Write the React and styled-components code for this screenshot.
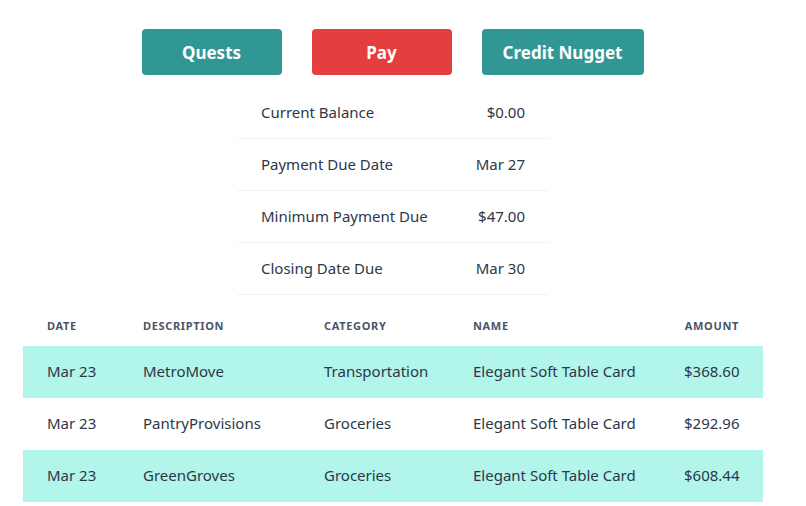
import React from "react";
import styled, { createGlobalStyle } from "styled-components";

const GlobalStyle = createGlobalStyle`
  body {
    margin: 0;
    background: #ffffff;
    font-family: "Noto Sans", "Open Sans", sans-serif;
    color: #2d3748;
  }
`;

const summary = [
  { label: "Current Balance", value: "$0.00" },
  { label: "Payment Due Date", value: "Mar 27" },
  { label: "Minimum Payment Due", value: "$47.00" },
  { label: "Closing Date Due", value: "Mar 30" },
];

const transactions = [
  { date: "Mar 23", desc: "MetroMove", cat: "Transportation", name: "Elegant Soft Table Card", amount: "$368.60" },
  { date: "Mar 23", desc: "PantryProvisions", cat: "Groceries", name: "Elegant Soft Table Card", amount: "$292.96" },
  { date: "Mar 23", desc: "GreenGroves", cat: "Groceries", name: "Elegant Soft Table Card", amount: "$608.44" },
];

const App = () => {
  return (
    <>
      <GlobalStyle />
      <Page>
        <Actions>
          <ActionButton $tone="teal" $width={140}>Quests</ActionButton>
          <ActionButton $tone="red" $width={140}>Pay</ActionButton>
          <ActionButton $tone="teal" $width={162}>Credit Nugget</ActionButton>
        </Actions>

        <Summary>
          <tbody>
            {summary.map((row) => (
              <SummaryRow key={row.label}>
                <SummaryCell>{row.label}</SummaryCell>
                <SummaryCell $right>{row.value}</SummaryCell>
              </SummaryRow>
            ))}
          </tbody>
        </Summary>

        <Transactions>
          <colgroup>
            <col style={{ width: 96 }} />
            <col style={{ width: 181 }} />
            <col style={{ width: 149 }} />
            <col style={{ width: 211 }} />
            <col style={{ width: 103 }} />
          </colgroup>
          <thead>
            <tr>
              <HeadCell>Date</HeadCell>
              <HeadCell>Description</HeadCell>
              <HeadCell>Category</HeadCell>
              <HeadCell>Name</HeadCell>
              <HeadCell $right>Amount</HeadCell>
            </tr>
          </thead>
          <tbody>
            {transactions.map((t, i) => (
              <TxRow key={t.desc} $striped={i % 2 === 0}>
                <TxCell>{t.date}</TxCell>
                <TxCell>{t.desc}</TxCell>
                <TxCell>{t.cat}</TxCell>
                <TxCell>{t.name}</TxCell>
                <TxCell $right>{t.amount}</TxCell>
              </TxRow>
            ))}
          </tbody>
        </Transactions>
      </Page>
    </>
  );
};

const Page = styled.div`
  width: 786px;
  padding-top: 29px;
  display: flex;
  flex-direction: column;
  align-items: center;
  gap: 11px;
`;

const Actions = styled.div`
  display: flex;
  gap: 30px;
  margin-left: -1px;
`;

const ActionButton = styled.button`
  width: ${(p) => p.$width}px;
  height: 46px;
  border: none;
  border-radius: 4px;
  background: ${(p) => (p.$tone === "red" ? "#e53e3e" : "#319795")};
  color: #ffffff;
  font-family: inherit;
  font-size: 17px;
  font-weight: 700;
  cursor: pointer;
`;

const Summary = styled.table`
  width: 310px;
  border-collapse: collapse;
`;

const SummaryRow = styled.tr`
  height: 52px;
  border-bottom: 1px solid #edf2f7;
`;

const SummaryCell = styled.td`
  padding: 0 24px;
  font-size: 15px;
  color: #2d3748;
  white-space: nowrap;
  text-align: ${(p) => (p.$right ? "right" : "left")};
  vertical-align: middle;
`;

const Transactions = styled.table`
  width: 740px;
  border-collapse: collapse;
  table-layout: fixed;
`;

const HeadCell = styled.th`
  height: 40px;
  padding: 0 24px;
  font-size: 11px;
  font-weight: 700;
  letter-spacing: 0.06em;
  text-transform: uppercase;
  color: #4a5568;
  text-align: ${(p) => (p.$right ? "right" : "left")};
  vertical-align: middle;
`;

const TxRow = styled.tr`
  height: 52px;
  background: ${(p) => (p.$striped ? "#b2f5ea" : "transparent")};
`;

const TxCell = styled.td`
  padding: 0 24px 2px;
  font-size: 15px;
  color: #2d3748;
  white-space: nowrap;
  text-align: ${(p) => (p.$right ? "right" : "left")};
  vertical-align: middle;
`;

export default App;
